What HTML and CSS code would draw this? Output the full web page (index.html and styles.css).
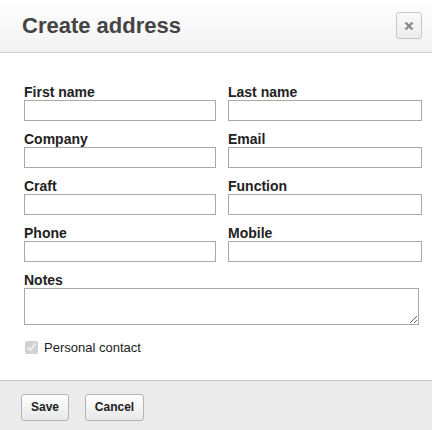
FILE: index.html
```html
<!DOCTYPE html>
<html>
<head>
<meta charset="utf-8">
<link rel="stylesheet" href="styles.css">
</head>
<body>
<div class="dialog">
  <div class="header">
    <h1 class="title">Create address</h1>
    <button class="close" type="button" aria-label="Close">
      <svg width="10" height="10" viewBox="0 0 10 10"><path d="M1.5 1.5 L8.5 8.5 M8.5 1.5 L1.5 8.5" stroke="#8a8a8a" stroke-width="2.4" stroke-linecap="butt"/></svg>
    </button>
  </div>
  <form class="form">
    <div class="grid">
      <div class="field"><label>First name</label><input type="text"></div>
      <div class="field"><label>Last name</label><input type="text"></div>
      <div class="field"><label>Company</label><input type="text"></div>
      <div class="field"><label>Email</label><input type="text"></div>
      <div class="field"><label>Craft</label><input type="text"></div>
      <div class="field"><label>Function</label><input type="text"></div>
      <div class="field"><label>Phone</label><input type="text"></div>
      <div class="field"><label>Mobile</label><input type="text"></div>
    </div>
    <div class="field notes"><label>Notes</label><textarea></textarea></div>
    <label class="check"><input type="checkbox" checked disabled><span>Personal contact</span></label>
  </form>
  <div class="footer">
    <button class="btn save" type="button">Save</button>
    <button class="btn cancel" type="button">Cancel</button>
  </div>
</div>
</body>
</html>
```

FILE: styles.css
```css
html, body {
  margin: 0;
  padding: 0;
  background: #fff;
}
body {
  font-family: "Liberation Sans", Arial, sans-serif;
  color: #222;
  width: 432px;
  height: 430px;
  overflow: hidden;
}
.dialog {
  display: flex;
  flex-direction: column;
  height: 430px;
}
.header {
  box-sizing: border-box;
  height: 53px;
  flex: none;
  border-bottom: 1px solid #cfcfcf;
  background: linear-gradient(#ffffff, #f1f1f1);
  display: flex;
  align-items: center;
  justify-content: space-between;
  padding: 0 10px 0 22px;
}
.title {
  margin: 0;
  font-size: 22px;
  font-weight: bold;
  color: #444;
  line-height: 26px;
  margin-top: -1px;
}
.close {
  width: 26px;
  height: 27px;
  margin-top: -1px;
  padding: 0;
  border: 1px solid #c8c8c8;
  border-radius: 3px;
  background: linear-gradient(#fafafa, #ececec);
  display: flex;
  align-items: center;
  justify-content: center;
}
.form {
  flex: 1;
  padding: 30px 10px 0 24px;
}
.grid {
  display: grid;
  grid-template-columns: 192px 194px;
  column-gap: 12px;
  row-gap: 9px;
}
.field {
  display: flex;
  flex-direction: column;
}
.field label {
  font-size: 14px;
  font-weight: bold;
  line-height: 16px;
  color: #222;
  padding-top: 1px;
  margin-bottom: 0;
}
.field input {
  box-sizing: border-box;
  height: 21px;
  width: 100%;
  margin: 0;
  border: 1px solid #a9a9a9;
  background: #fff;
  padding: 0 3px;
}
.notes {
  margin-top: 9px;
}
.notes textarea {
  box-sizing: border-box;
  width: 395px;
  height: 37px;
  margin: 0;
  border: 1px solid #a9a9a9;
  padding: 2px;
}
.check {
  display: flex;
  align-items: center;
  margin-top: 15px;
  font-size: 13px;
  color: #222;
}
.check input {
  margin: 0 6px 0 1px;
  width: 13px;
  height: 13px;
}
.footer {
  box-sizing: border-box;
  flex: none;
  height: 50px;
  border-top: 1px solid #c4c4c4;
  background: #ebebeb;
  display: flex;
  align-items: flex-start;
  gap: 16px;
  padding: 13px 0 0 21px;
}
.btn {
  height: 27px;
  padding: 0 0 1px;
  font-family: "Liberation Sans", Arial, sans-serif;
  font-size: 12px;
  font-weight: bold;
  color: #222;
  border: 1px solid #b4b4b4;
  border-radius: 3px;
  background: linear-gradient(#ffffff, #e8e8e8);
}
.save { width: 48px; }
.cancel { width: 59px; }
```
